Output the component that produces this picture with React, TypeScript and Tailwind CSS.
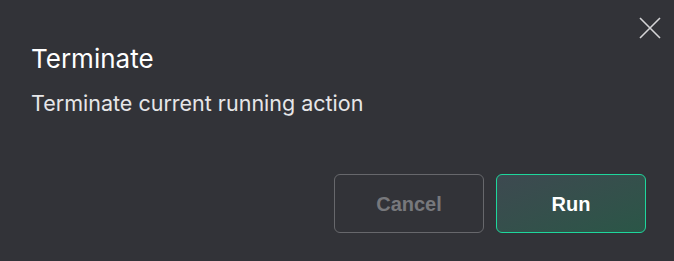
export default function App() {
  return (
    <div className="w-[674px] h-[261px] bg-[#323338] flex flex-col font-['Inter',sans-serif] relative">
      <button
        type="button"
        className="absolute right-[12px] top-[16px] w-[24px] h-[24px] flex items-center justify-center text-[#d4d4d6]"
        aria-label="Close"
      >
        <svg width="22" height="22" viewBox="0 0 22 22" fill="none" stroke="currentColor" strokeWidth="1.6">
          <path d="M1 1L21 21M21 1L1 21" />
        </svg>
      </button>

      <div className="pl-[31px] pt-[43px]">
        <h2 className="text-[26px] leading-[31px] text-white font-normal">Terminate</h2>
        <p className="mt-[16px] text-[21.5px] leading-[26px] text-[#e6e6e8]">Terminate current running action</p>
      </div>

      <div className="mt-auto flex justify-end gap-[12px] pr-[28px] pb-[28px]">
        <button
          type="button"
          className="w-[150px] h-[59px] rounded-[6px] border border-[#67686c] text-[#77787c] text-[20px] font-bold font-['Liberation_Sans',sans-serif]"
        >
          Cancel
        </button>
        <button
          type="button"
          className="w-[150px] h-[59px] rounded-[6px] border-[1.5px] border-[#1ed79c] bg-gradient-to-br from-[#3d4950] to-[#2a5647] text-white text-[20px] font-bold font-['Liberation_Sans',sans-serif]"
        >
          Run
        </button>
      </div>
    </div>
  )
}
